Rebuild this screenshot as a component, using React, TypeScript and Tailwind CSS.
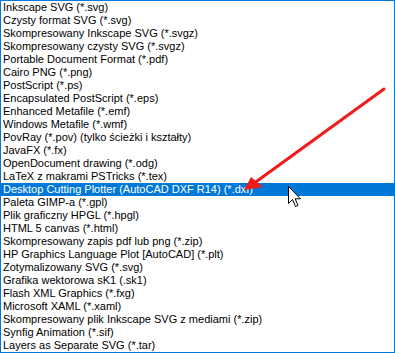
import React from "react";

const items = [
  "Inkscape SVG (*.svg)",
  "Czysty format SVG (*.svg)",
  "Skompresowany Inkscape SVG (*.svgz)",
  "Skompresowany czysty SVG (*.svgz)",
  "Portable Document Format (*.pdf)",
  "Cairo PNG (*.png)",
  "PostScript (*.ps)",
  "Encapsulated PostScript (*.eps)",
  "Enhanced Metafile (*.emf)",
  "Windows Metafile (*.wmf)",
  "PovRay (*.pov) (tylko ścieżki i kształty)",
  "JavaFX (*.fx)",
  "OpenDocument drawing (*.odg)",
  "LaTeX z makrami PSTricks (*.tex)",
  "Desktop Cutting Plotter (AutoCAD DXF R14) (*.dxf)",
  "Paleta GIMP-a (*.gpl)",
  "Plik graficzny HPGL (*.hpgl)",
  "HTML 5 canvas (*.html)",
  "Skompresowany zapis pdf lub png (*.zip)",
  "HP Graphics Language Plot [AutoCAD] (*.plt)",
  "Zotymalizowany SVG (*.svg)",
  "Grafika wektorowa sK1 (.sk1)",
  "Flash XML Graphics (*.fxg)",
  "Microsoft XAML (*.xaml)",
  "Skompresowany plik Inkscape SVG z mediami (*.zip)",
  "Synfig Animation (*.sif)",
  "Layers as Separate SVG (*.tar)",
];

export default function App() {
  return (
    <div className="relative w-[395px] h-[353px] border border-[#0078d7] bg-white overflow-hidden font-['Liberation_Sans',Arial,sans-serif] text-[11px]">
      <div className="flex flex-col">
        {items.map((t, i) => (
          <div
            key={i}
            className={
              i === 14
                ? "h-[13px] leading-[13px] pl-[2px] whitespace-nowrap bg-[#0078d7] text-white"
                : "h-[13px] leading-[13px] pl-[2px] whitespace-nowrap text-black"
            }
          >
            {t}
          </div>
        ))}
      </div>
      <svg className="absolute left-0 top-0 pointer-events-none" width="395" height="353">
        <line x1="383" y1="88" x2="252" y2="183" stroke="#f21b1b" strokeWidth="3" strokeLinecap="round" />
        <polygon points="243,189 250,176 262,186" fill="#f21b1b" />
        <path
          d="M287.5 185.5 L287.5 202.5 L291.5 198.5 L294.5 205.5 L297 204.5 L294.2 197.8 L299.5 197.8 Z"
          fill="#ffffff"
          stroke="#000000"
          strokeWidth="1"
          strokeLinejoin="miter"
        />
      </svg>
    </div>
  );
}
